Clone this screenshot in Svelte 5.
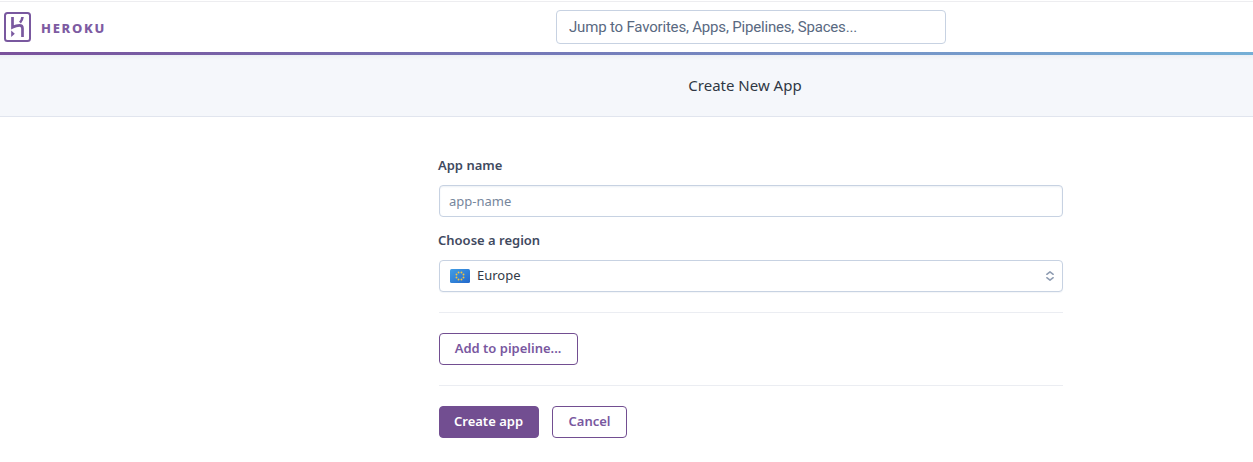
<script lang="ts">
  let appName = $state('');
  let query = $state('');
  const stars = Array.from({ length: 8 }, (_, i) => {
    const a = ((i + 0.5) * Math.PI) / 4;
    return { x: 10 + 3.8 * Math.sin(a), y: 7 - 3.8 * Math.cos(a) };
  });
</script>

<header class="topbar">
  <a class="brand" href="#home" aria-label="Heroku">
    <svg class="mark" width="28" height="30" viewBox="0 0 28 30" fill="none">
      <rect x="1" y="1" width="25" height="28" rx="2.5" stroke="#79589f" stroke-width="2" />
      <path d="M8.500 5v10.300c2.500-1.200 4.700-1.900 7-1.900 2.400 0 3 1.100 3 3V25" stroke="#79589f" stroke-width="2.700" />
      <path d="M18.500 5c-.2 2.100-1 4-2.500 5.700" stroke="#79589f" stroke-width="2.600" />
      <path d="M7.200 18.500l3.600 3.300-3.600 3.300z" fill="#79589f" />
    </svg>
    <span class="word">HEROKU</span>
  </a>
  <input class="search" bind:value={query} placeholder="Jump to Favorites, Apps, Pipelines, Spaces..." />
</header>

<div class="subhead"><h1>Create New App</h1></div>

<main>
  <label for="name">App name</label>
  <input id="name" class="field" bind:value={appName} placeholder="app-name" />
  <div class="label">Choose a region</div>
  <div class="field select" role="button" tabindex="0">
    <svg width="20" height="14" viewBox="0 0 20 14">
      <defs>
        <linearGradient id="flag" x1="0" y1="0" x2="1" y2="1">
          <stop offset="0" stop-color="#419ee5" />
          <stop offset="1" stop-color="#2368cb" />
        </linearGradient>
      </defs>
      <rect width="20" height="14" rx="1.500" fill="url(#flag)" />
      {#each stars as s}
        <circle cx={s.x} cy={s.y} r="0.950" fill="#f4c33c" />
      {/each}
    </svg>
    <span class="region">Europe</span>
    <svg class="arrows" width="10" height="12" viewBox="0 0 10 12" fill="none" stroke="#8e9cb2" stroke-width="1.500" stroke-linecap="round" stroke-linejoin="round">
      <path d="M1.800 4.300L5 1.800l3.200 2.500M1.800 7.700l3.200 2.500 3.200-2.500" />
    </svg>
  </div>
  <hr />
  <button class="btn pipeline">Add to pipeline...</button>
  <hr />
  <div class="actions">
    <button class="btn primary">Create app</button>
    <button class="btn cancel">Cancel</button>
  </div>
</main>

<style>
  :global(body) {
    background: #fff;
    font-family: 'Noto Sans', 'Open Sans', sans-serif;
    color: #3f4a5f;
  }
  .topbar {
    box-sizing: border-box;
    height: 55px;
    padding: 1px 0 0 4px;
    display: grid;
    grid-template-columns: 552px 390px;
    align-items: start;
    background:
      linear-gradient(#ededf0, #ededf0) 0 1px / 100% 1px no-repeat,
      linear-gradient(90deg, #79519b, #7479b8 44%, #7598c9 75%, #75afd6) 0 100% / 100% 3px no-repeat,
      #fff;
  }
  .brand {
    display: flex;
    align-items: center;
    gap: 9px;
    margin-top: 11px;
    height: 30px;
    text-decoration: none;
    color: #7d5ba2;
  }
  .word {
    font-size: 13px;
    font-weight: 800;
    letter-spacing: 1.700px;
    line-height: 30px;
    padding-top: 2px;
  }
  input {
    box-sizing: border-box;
    font-family: inherit;
    outline: none;
  }
  .search {
    width: 390px;
    height: 34px;
    margin-top: 9px;
    padding: 0 12px 1px;
    border: 1px solid #c7d2e2;
    border-radius: 4px;
    background: #fff;
    font-family: Roboto, sans-serif;
    font-size: 15px;
    letter-spacing: -0.180px;
    color: #596981;
  }
  .search::placeholder {
    color: #596981;
    opacity: 1;
  }
  .subhead {
    box-sizing: border-box;
    height: 62px;
    padding: 0 0 2px 237px;
    display: flex;
    align-items: center;
    justify-content: center;
    border-bottom: 1px solid #e1e5ee;
    background: linear-gradient(#eceff4, #f5f7fb 5px);
  }
  h1 {
    margin: 0;
    font-size: 15px;
    font-weight: 400;
    line-height: 20px;
    color: #2f3744;
  }
  main {
    width: 624px;
    margin-left: 439px;
    padding-top: 38px;
  }
  label,
  .label {
    display: block;
    height: 20px;
    margin: 0 0 10px -1px;
    font-size: 13px;
    font-weight: 600;
    line-height: 20px;
  }
  .field {
    box-sizing: border-box;
    display: block;
    width: 624px;
    height: 32px;
    padding: 0 9px;
    border: 1px solid #c7d2e2;
    border-radius: 4px;
    background: #fff;
    font-size: 13px;
    color: #333b47;
    box-shadow: inset 0 1px 2px #edf0f5;
  }
  .field::placeholder {
    color: #76869c;
    opacity: 1;
  }
  .label {
    margin-top: 13px;
  }
  .select {
    display: flex;
    align-items: center;
    padding: 0 7px 0 10px;
    box-shadow: 0 1px 1px #f3f5f8;
  }
  .region {
    margin-left: 7px;
    padding-bottom: 2px;
    line-height: 20px;
  }
  .arrows {
    margin-left: auto;
  }
  hr {
    height: 1px;
    margin: 20px 0;
    border: 0;
    background: #ebedf2;
  }
  .btn {
    box-sizing: border-box;
    height: 32px;
    padding: 0 1px 2px 0;
    border: 1px solid #724e91;
    border-radius: 4px;
    background: #fff;
    color: #79589f;
    font-family: inherit;
    font-size: 13px;
    font-weight: 600;
    line-height: 20px;
    white-space: nowrap;
  }
  .pipeline {
    display: block;
    width: 139px;
  }
  .actions {
    display: flex;
    gap: 13px;
  }
  .primary {
    width: 100px;
    background: #724e91;
    color: #fff;
  }
  .cancel {
    width: 75px;
    padding-right: 0;
  }
</style>
